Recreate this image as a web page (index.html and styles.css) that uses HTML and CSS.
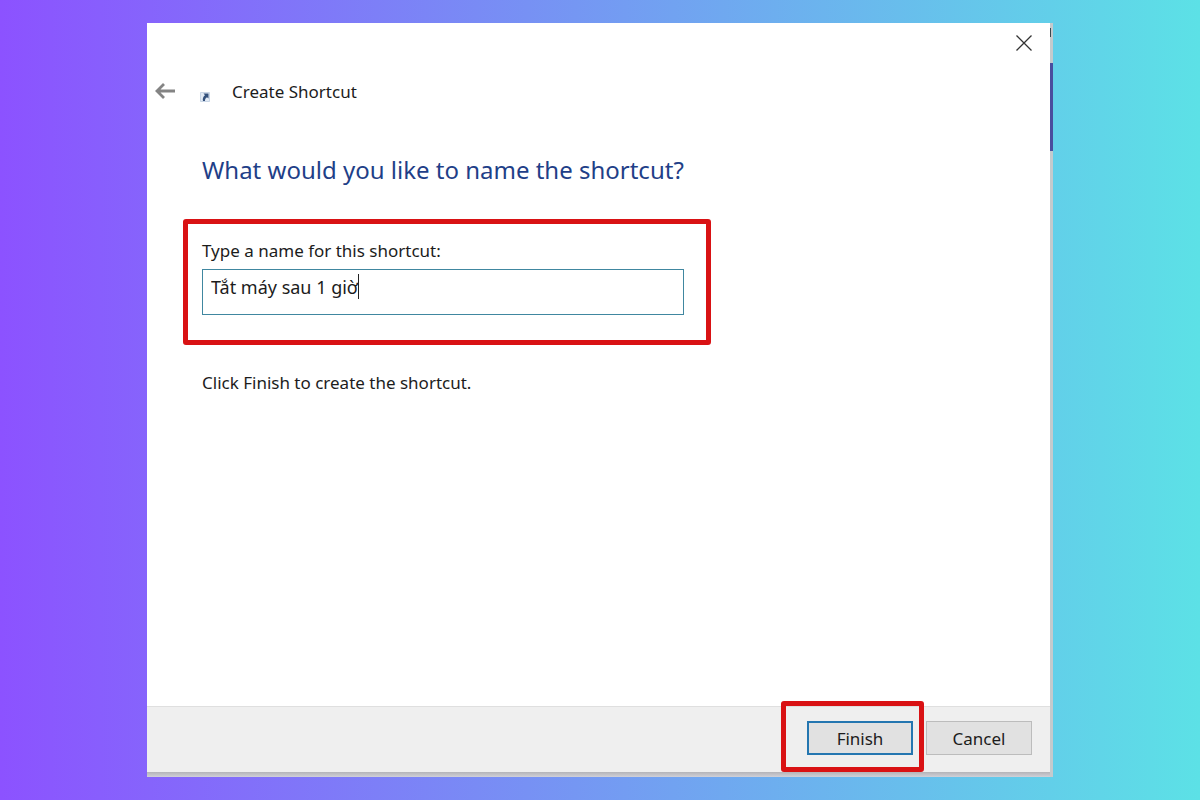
FILE: index.html
```html
<!DOCTYPE html>
<html lang="en">
<head>
<meta charset="utf-8">
<meta name="viewport" content="width=device-width, initial-scale=1">
<title>Create Shortcut</title>
<link rel="stylesheet" href="styles.css">
</head>
<body class="desktop">
<div class="frame">
<main class="dialog">
  <div class="titlebar">
    <button class="icon-button" type="button" aria-label="Close">
      <svg width="18" height="18" viewBox="0 0 18 18" fill="none" stroke="#333" stroke-width="1.3"><path d="M1.500 1.500l15 15M16.500 1.500l-15 15"/></svg>
    </button>
  </div>
  <header class="header">
    <button class="icon-button" type="button" aria-label="Back">
      <svg width="22" height="18" viewBox="0 0 22 18" fill="none" stroke="#848484" stroke-width="2.800"><path d="M2 8H20M9 1L2 8l7 7"/></svg>
    </button>
    <svg class="shortcut-icon" width="10" height="10" viewBox="0 0 10 10"><path fill="#e3ebf5" stroke="#c9d6e6" d="M.5.5h9v9h-9z"/><path fill="#34517c" d="M3.500 1.500h5v5L7 5.200C5.500 6 5 7 5 9H3C2.300 6.500 3.300 4.500 5 3.200z"/></svg>
    <h1 class="title">Create Shortcut</h1>
  </header>
  <form class="form" id="shortcut-form">
    <h2 class="question">What would you like to name the shortcut?</h2>
    <div class="name-group">
      <label class="label" for="name">Type a name for this shortcut:</label>
      <div class="field">
        <input class="input" id="name" type="text" value="Tắt máy sau 1 giờ" spellcheck="false">
        <span class="caret"></span>
      </div>
    </div>
    <p class="hint">Click Finish to create the shortcut.</p>
  </form>
  <footer class="footer">
    <div class="highlight"><button class="button button-primary" type="submit" form="shortcut-form">Finish</button></div>
    <button class="button" type="button">Cancel</button>
  </footer>
</main>
</div>
</body>
</html>
```
FILE: styles.css
```css
* {
  box-sizing: border-box;
}

.desktop {
  display: flex;
  min-height: 100vh;
  margin: 0;
  padding: 23px 147px;
  background: linear-gradient(90deg, #8c52ff, #5ce1e6);
  color: #1c1c1c;
  font: 17px/24px "Noto Sans", "Open Sans", sans-serif;
}

.frame {
  display: flex;
  flex: 1;
  padding: 0 3px 5px 0;
  background:
    linear-gradient(#4a4e9e, #4a4e9e) right 40px / 3px 88px no-repeat,
    linear-gradient(90deg, #39474f 1px, #c4cacd 1px) right 5px / 3px 9px no-repeat,
    linear-gradient(#c4cacd, #c4cacd) right top / 3px 100% no-repeat,
    linear-gradient(to top, #d0d0d8, #b4b4b8 5px);
}

.dialog {
  display: flex;
  flex: 1;
  flex-direction: column;
  min-width: 0;
  background: #fff;
}

.titlebar {
  display: flex;
  justify-content: flex-end;
  padding: 11px 17px 0;
}

.icon-button {
  display: flex;
  padding: 0;
  border: 0;
  background: none;
}

.header {
  display: flex;
  align-items: center;
  padding: 28px 8px 0;
}

.shortcut-icon {
  margin: 10px 22px 0 23px;
}

.title {
  margin: 0;
  font-size: 17px;
  font-weight: 400;
}

.form {
  flex: 1;
  padding: 0 36px;
}

.question {
  margin: 50px 19px 33px;
  color: #1f3f88;
  font-size: 24px;
  font-weight: 400;
  line-height: 32px;
}

.name-group {
  display: flex;
  flex-direction: column;
  gap: 6px;
  max-width: 528px;
  padding: 15px 22px 25px 14px;
  border: 5px solid #d91214;
  border-radius: 3px;
}

.field {
  position: relative;
  display: flex;
}

.input {
  flex: 1;
  min-width: 0;
  height: 46px;
  padding: 0 8px 10px;
  border: 1px solid #4087a0;
  background: #fff;
  color: inherit;
  font: inherit;
  font-size: 18px;
}

.caret {
  position: absolute;
  top: 5px;
  left: 156px;
  width: 1px;
  height: 25px;
  background: #222;
}

.hint {
  margin: 26px 19px;
}

.footer {
  display: flex;
  justify-content: flex-end;
  gap: 13px;
  padding: 14px 18px 17px;
  border-top: 1px solid #dfdfdf;
  background: #efefef;
}

.button {
  width: 106px;
  height: 34px;
  padding: 2px 0 0;
  border: 1px solid #bcbcbc;
  background: #e1e1e1;
  color: inherit;
  font: inherit;
}

.button-primary {
  border: 2px solid #2476b0;
}

.highlight {
  position: relative;
}

.highlight::after {
  position: absolute;
  inset: -20px -11px -17px -26px;
  border: 5px solid #d91214;
  border-radius: 3px;
  content: "";
  pointer-events: none;
}
```
